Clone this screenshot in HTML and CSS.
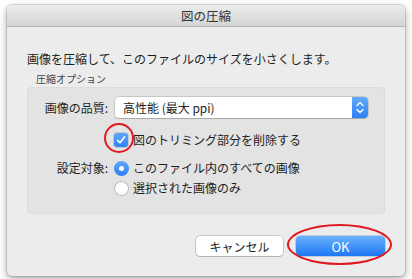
FILE: index.html
```html
<!DOCTYPE html>
<html lang="ja">
<head>
<meta charset="utf-8">
<link rel="stylesheet" href="styles.css">
</head>
<body>
<div class="window">
  <div class="titlebar">図の圧縮</div>
  <div class="content">
    <p class="message">画像を圧縮して、このファイルのサイズを小さくします。</p>
    <div class="legend">圧縮オプション</div>
    <div class="group">
      <div class="label row-quality">画像の品質:</div>
      <div class="control row-quality">
        <div class="popup">
          <span class="popup-text">高性能 (最大 ppi)</span>
          <span class="popup-arrows">
            <svg width="16" height="21" viewBox="0 0 16 21"><path d="M5 8.5 L8 5.5 L11 8.5 M5 12.5 L8 15.5 L11 12.5" fill="none" stroke="#fff" stroke-width="1.4" stroke-linecap="round" stroke-linejoin="round"/></svg>
          </span>
        </div>
      </div>
      <div class="label row-check"></div>
      <div class="control row-check">
        <span class="mark">
          <span class="checkbox"><svg width="14" height="14" viewBox="0 0 14 14"><path d="M3.6 7.4 L6 9.8 L10.6 3.8" fill="none" stroke="#fff" stroke-width="1.6" stroke-linecap="round" stroke-linejoin="round"/></svg></span>
          <span class="annot annot-check"></span>
        </span>
        <span class="option-text">図のトリミング部分を削除する</span>
      </div>
      <div class="label row-radio1">設定対象:</div>
      <div class="control row-radio1">
        <span class="radio radio-on"><span class="dot"></span></span>
        <span class="option-text">このファイル内のすべての画像</span>
      </div>
      <div class="label row-radio2"></div>
      <div class="control row-radio2">
        <span class="radio radio-off"></span>
        <span class="option-text">選択された画像のみ</span>
      </div>
    </div>
    <div class="buttons">
      <button class="btn btn-cancel">キャンセル</button>
      <span class="ok-wrap">
        <button class="btn btn-ok">OK</button>
        <span class="annot annot-ok"></span>
      </span>
    </div>
  </div>
</div>
</body>
</html>
```
FILE: styles.css
```css
* { box-sizing: border-box; }
html, body { margin: 0; padding: 0; background: #ffffff; }
body {
  width: 412px;
  height: 279px;
  padding: 5px 7px 0 7px;
  overflow: hidden;
  font-family: "Noto Sans CJK JP", "Noto Sans", sans-serif;
  color: #1e1e1e;
}
.window {
  width: 398px;
  height: 271px;
  background: #ececec;
  border-radius: 5px;
  box-shadow: 0 0 0 1px rgba(0,0,0,0.12), 0 3px 9px rgba(0,0,0,0.35);
  overflow: visible;
  display: flex;
  flex-direction: column;
}
.titlebar {
  height: 22px;
  line-height: 21px;
  text-align: center;
  font-size: 12.5px;
  color: #333;
  background: linear-gradient(#ececec, #d5d5d5);
  border-bottom: 1px solid #b4b4b4;
  border-radius: 5px 5px 0 0;
}
.content {
  padding: 0 20px;
  display: flex;
  flex-direction: column;
}
.message {
  margin: 24px 0 0 0;
  font-size: 12px;
  line-height: 16px;
  height: 16px;
}
.legend {
  margin: 5px 0 0 9px;
  font-size: 10px;
  line-height: 14px;
  height: 15px;
  color: #444;
}
.group {
  background: #e3e3e3;
  border-radius: 4px;
  border: 1px solid #dcdcdc;
  padding: 9px 16px 15px 0;
  display: grid;
  grid-template-columns: 80px 1fr;
  column-gap: 6px;
  grid-template-rows: 21px 12px 20px 8px 20px 20px;
  font-size: 12px;
}
.label {
  text-align: right;
  line-height: 20px;
  white-space: nowrap;
}
.row-quality { grid-row: 1; }
.row-check { grid-row: 3; }
.row-radio1 { grid-row: 5; }
.row-radio2 { grid-row: 6; }
.label.row-quality { line-height: 21px; }
.control {
  display: flex;
  align-items: center;
}
.popup {
  margin-left: 1px;
  flex: 1;
  height: 21px;
  background: #fff;
  border-radius: 4px;
  box-shadow: 0 0 0 0.5px rgba(0,0,0,0.25), 0 1px 1px rgba(0,0,0,0.15);
  display: flex;
  align-items: center;
  overflow: hidden;
}
.popup-text {
  flex: 1;
  padding-left: 8px;
  font-size: 12px;
  line-height: 21px;
}
.popup-arrows {
  width: 16px;
  height: 21px;
  background: linear-gradient(#64a9fb, #2c7ff5);
  display: flex;
}
.mark {
  position: relative;
  width: 14px;
  height: 14px;
  margin-right: 5px;
}
.checkbox {
  display: block;
  width: 14px;
  height: 14px;
  border-radius: 3px;
  background: linear-gradient(#5da7fb, #2f83f5);
  box-shadow: 0 0 0 0.5px rgba(0,0,80,0.25);
}
.checkbox svg { display: block; }
.option-text {
  line-height: 20px;
  white-space: nowrap;
}
.radio {
  width: 15px;
  height: 15px;
  border-radius: 50%;
  margin-right: 4px;
  display: flex;
  align-items: center;
  justify-content: center;
}
.radio-on {
  background: linear-gradient(#5ea8fb, #2d80f5);
}
.radio-on .dot {
  width: 5px;
  height: 5px;
  border-radius: 50%;
  background: #fff;
}
.radio-off {
  background: #fff;
  box-shadow: inset 0 0 0 1px #b8b8b8;
}
.buttons {
  margin-top: 22px;
  display: flex;
  justify-content: flex-end;
  gap: 13px;
}
.btn {
  font-family: "Noto Sans CJK JP", "Noto Sans", sans-serif;
  font-size: 12px;
  height: 20px;
  line-height: 19px;
  padding: 0;
  border: none;
  border-radius: 4px;
  cursor: default;
}
.btn-cancel {
  width: 87px;
  background: #fff;
  color: #1e1e1e;
  box-shadow: 0 0 0 0.5px rgba(0,0,0,0.3), 0 1px 1px rgba(0,0,0,0.12);
}
.ok-wrap {
  position: relative;
  display: block;
  margin-right: 0;
}
.btn-ok {
  display: block;
  width: 89px;
  color: #fff;
  font-size: 13px;
  background: linear-gradient(#6cb0fc, #1d78f5);
  box-shadow: 0 0 0 0.5px rgba(0,40,140,0.35);
}
.annot {
  position: absolute;
  border: 2px solid #e01820;
  border-radius: 50%;
  pointer-events: none;
}
.annot-check {
  left: -10px;
  top: -10px;
  width: 30px;
  height: 30px;
}
.annot-ok {
  left: -9px;
  top: -12px;
  width: 105px;
  height: 41px;
}
```
